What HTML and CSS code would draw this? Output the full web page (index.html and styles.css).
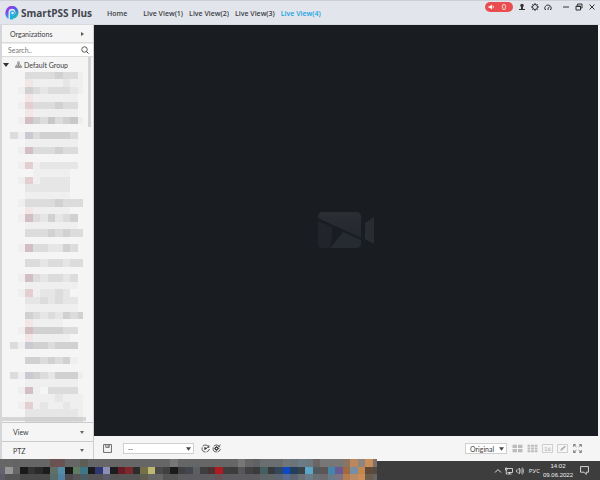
FILE: index.html
```html
<!DOCTYPE html>
<html lang="en">
<head>
  <meta charset="UTF-8">
  <meta name="viewport" content="width=device-width, initial-scale=1.0">
  <title>SmartPSS Plus</title>
  <link rel="stylesheet" href="styles.css">
</head>
<body>
  <header class="header">
    <svg class="logo" viewBox="0 0 28 28">
      <defs>
        <linearGradient id="logoTop" x1="0" y1="0" x2="1" y2="1">
          <stop offset="0" stop-color="#a03be8"/>
          <stop offset="0.45" stop-color="#5a4fe6"/>
          <stop offset="1" stop-color="#18cfae"/>
        </linearGradient>
        <linearGradient id="logoStem" x1="0" y1="0" x2="0" y2="1">
          <stop offset="0" stop-color="#7c46e8"/>
          <stop offset="1" stop-color="#1fb5ee"/>
        </linearGradient>
      </defs>
      <path d="M4 12 A10 10 0 1 1 16 22.500" fill="none" stroke="url(#logoTop)" stroke-width="6"/>
      <path d="M1 12 L7 12 L7 26 A14 14 0 0 1 1 12Z" fill="url(#logoStem)"/>
      <path d="M10 27 L10 15 A5 5 0 1 1 16 19 L16 27Z" fill="#19b4e6"/>
      <circle cx="15" cy="14" r="2.500" fill="#e6ebf5"/>
    </svg>
    <h1 class="brand">SmartPSS Plus</h1>
    <nav class="tabs">
      <a class="tab home" href="#">Home</a>
      <a class="tab" href="#">Live View(1)</a>
      <a class="tab" href="#">Live View(2)</a>
      <a class="tab" href="#">Live View(3)</a>
      <a class="tab active" href="#">Live View(4)</a>
    </nav>
    <div class="header-tools">
      <button class="alarm" type="button">
        <svg viewBox="0 0 16 14"><path d="M1 5h3l5-4v12l-5-4H1z" fill="#fff"/><path d="M11 4q3 3 0 6" fill="none" stroke="#fff" stroke-width="2"/></svg>
        <span>0</span>
      </button>
      <button class="tool" type="button" aria-label="User">
        <svg viewBox="0 0 16 16"><circle cx="8" cy="5" r="3.500"/><path d="M6 8h4v4h4v2H2v-2h4z"/></svg>
      </button>
      <button class="tool" type="button" aria-label="Settings">
        <svg viewBox="0 0 16 16"><g fill="none" stroke="#333"><circle cx="8" cy="8" r="5" stroke-width="2"/><path d="M8 0v3M8 13v3M0 8h3M13 8h3M2.500 2.500l2 2M11.500 11.500l2 2M2.500 13.500l2-2M11.500 4.500l2-2" stroke-width="2"/></g></svg>
      </button>
      <button class="tool" type="button" aria-label="Status">
        <svg viewBox="0 0 16 16"><path d="M4 13H2a6.500 6.500 0 1 1 12 0h-2M7 13l4-6M9 13h1" fill="none" stroke="#333" stroke-width="2"/></svg>
      </button>
    </div>
    <div class="window-tools">
      <button class="tool" type="button" aria-label="Minimize">
        <svg viewBox="0 0 16 16"><path d="M2 8h12" stroke="#333" stroke-width="2"/></svg>
      </button>
      <button class="tool" type="button" aria-label="Restore">
        <svg viewBox="0 0 16 16"><path d="M5 5V2h9v8h-3M2 6h9v8H2zM2 7h9" fill="none" stroke="#333" stroke-width="2"/></svg>
      </button>
      <button class="tool" type="button" aria-label="Close">
        <svg viewBox="0 0 16 16"><path d="M3 3l10 10M13 3L3 13" stroke="#333" stroke-width="2"/></svg>
      </button>
    </div>
  </header>

  <div class="content">
    <aside class="sidebar">
      <button class="section-title organizations" type="button">
        <span>Organizations</span>
        <i class="arrow-right"></i>
      </button>
      <div class="search">
        <input type="text" placeholder="Search.." aria-label="Search">
        <svg viewBox="0 0 16 16"><circle cx="7" cy="7" r="5.500" fill="none" stroke="#333" stroke-width="1.600"/><path d="M11 11l4 4" stroke="#333" stroke-width="2"/></svg>
      </div>
      <div class="tree">
        <div class="tree-root">
          <i class="arrow-down dark"></i>
          <svg viewBox="0 0 16 16"><path d="M6 2h4v4H6zM8 6v3M3 12V9h10v3M8 9v3M1 12h4v3H1zM6 12h4v3H6zM11 12h4v3h-4z" fill="none" stroke="#555" stroke-width="1.200"/></svg>
          <span>Default Group</span>
        </div>
        <svg class="tree-items" id="treeItems" viewBox="0 0 9.730 47" preserveAspectRatio="none"></svg>
        <div class="scroll-y"></div>
        <div class="scroll-x"></div>
      </div>
      <button class="section-title" type="button"><span>View</span><i class="arrow-down"></i></button>
      <button class="section-title last" type="button"><span>PTZ</span><i class="arrow-down"></i></button>
    </aside>

    <main class="live">
      <div class="video">
        <svg class="camera" viewBox="0 0 58 40">
          <defs>
            <linearGradient id="cam" x1="0" y1="0" x2="0" y2="1">
              <stop offset="0" stop-color="#2b2f34"/>
              <stop offset="1" stop-color="#23272e"/>
            </linearGradient>
          </defs>
          <path d="M5 1h34q5 0 5 5v21L1 7q0-6 4-6z" fill="url(#cam)"/>
          <path d="M1 10l14 6v12l-3 9H5q-4 0-4-4z" fill="#21252b"/>
          <path d="M26 21l18 8v4q0 4-5 4H13z" fill="#262a31"/>
          <path d="M48 12l9-6v27l-9-5z" fill="#292d32"/>
        </svg>
      </div>
      <div class="toolbar">
        <button class="tool save" type="button" aria-label="Save view">
          <svg viewBox="0 0 16 16"><path d="M1 1h14v14H1zM5 1v5h6V1M9 2v3" fill="none" stroke="#555" stroke-width="1.500"/></svg>
        </button>
        <select class="plan" aria-label="View plan"><option>--</option></select>
        <div class="tour">
          <button class="tool" type="button" aria-label="Start tour">
            <svg viewBox="0 0 16 16"><path d="M14 6A6.500 6.500 0 0 0 3 4M2 6v4A6.500 6.500 0 0 0 8 14.500M10 14q4-1 5-5M14 2v4h-4" fill="none" stroke="#444" stroke-width="1.500"/><path d="M6 5l5 3-5 3z"/></svg>
          </button>
          <button class="tool" type="button" aria-label="Tour settings">
            <svg viewBox="0 0 16 16"><path d="M14 6A6.500 6.500 0 0 0 3 4M2 6v4A6.500 6.500 0 0 0 8 14.500M10 14q4-1 5-5M15 1l-4 5" fill="none" stroke="#444" stroke-width="1.500"/><circle cx="8" cy="8" r="2.500" fill="none" stroke="#333" stroke-width="2"/><path d="M4 8h2M10 8h3M8 4v2M8 10v3" stroke="#444" stroke-width="1.500"/></svg>
          </button>
        </div>
        <select class="scale" aria-label="Scale"><option>Original</option></select>
        <div class="layouts">
          <button class="layout" type="button" aria-label="4 windows">
            <svg viewBox="0 0 20 16"><path d="M1 1h8v6H1zM11 1h8v6h-8zM1 9h8v6H1zM11 9h8v6h-8z" fill="#bbb"/></svg>
          </button>
          <button class="layout" type="button" aria-label="9 windows">
            <svg viewBox="0 0 20 16"><path d="M1 1h5v4H1zM7.500 1h5v4h-5zM14 1h5v4h-5zM1 6h5v4H1zM7.500 6h5v4h-5zM14 6h5v4h-5zM1 11h5v4H1zM7.500 11h5v4h-5zM14 11h5v4h-5z" fill="#bbb"/></svg>
          </button>
          <button class="layout boxed" type="button">16</button>
          <button class="layout boxed" type="button" aria-label="Custom layout">
            <svg viewBox="0 0 20 16"><path d="M6 12l1-3 7-6 2 2-7 6z" fill="#aaa"/></svg>
          </button>
          <button class="layout" type="button" aria-label="Full screen">
            <svg viewBox="0 0 20 16"><path d="M3 5V1h4M13 1h4v4M17 11v4h-4M7 15H3v-4M3 1l5 4M17 1l-5 4M17 15l-5-4M3 15l5-4" fill="none" stroke="#666" stroke-width="1.500"/></svg>
          </button>
        </div>
      </div>
    </main>
  </div>

  <footer class="taskbar">
    <svg class="apps" id="taskbarApps" viewBox="0.333 0 50.267 2.800" preserveAspectRatio="none"></svg>
    <div class="tray">
      <svg viewBox="0 0 16 16"><path d="M2 11l6-6 6 6" fill="none" stroke="#eee" stroke-width="1.800"/></svg>
      <svg viewBox="0 0 16 16"><path d="M4 3h11v8H5M9 11v3M6 14h7M1 2h3v4H1zM2.500 6v8h3" fill="none" stroke="#eee" stroke-width="1.600"/></svg>
      <svg viewBox="0 0 16 16"><path d="M1 6h2l4-4v12l-4-4H1zM9 5q2 3 0 6M11 3q4 5 0 10M13 1q5 7 0 14" fill="none" stroke="#ddd" stroke-width="1.400"/></svg>
      <span class="lang">РУС</span>
      <div class="clock"><span>14:02</span><span>09.06.2022</span></div>
      <svg class="notify" viewBox="0 0 16 16"><path d="M1 1h14v10h-4v4l-4-4H1z" fill="none" stroke="#eee" stroke-width="1.500"/></svg>
    </div>
  </footer>

  <script src="script.js"></script>
</body>
</html>
```

FILE: styles.css
```css
* {
  box-sizing: border-box;
}

body {
  display: flex;
  flex-direction: column;
  height: 100vh;
  margin: 0;
  overflow: hidden;
  font-family: Lato, sans-serif;
  font-size: 7px;
  color: #3c3c3c;
  background-color: #f5f5f6;
}

button,
input,
select {
  margin: 0;
  padding: 0;
  border: none;
  background: none;
  font: inherit;
  color: inherit;
}

svg {
  display: block;
  flex: none;
}

/* header */
.header {
  display: flex;
  align-items: center;
  flex: none;
  height: 25px;
  padding: 1px 4px 0 5px;
  border-top: 1px solid #cdd0d7;
  border-bottom: 1px solid #d6d8dd;
  background-color: #e2e5eb;
}

.logo {
  width: 14px;
  height: 14px;
}

.brand {
  width: 86px;
  margin: 0 0 0 2px;
  font-family: "Open Sans", sans-serif;
  font-size: 10px;
  font-weight: bold;
  white-space: nowrap;
  color: #41454f;
}

.tabs {
  display: flex;
  gap: 6px;
  font-family: "Open Sans", sans-serif;
  font-weight: 600;
  white-space: nowrap;
}

.tab {
  color: #3c3f45;
  text-decoration: none;
}

.home {
  margin-right: 10px;
}

.active {
  color: #16a4e0;
}

.header-tools,
.window-tools {
  display: flex;
  align-items: center;
  align-self: flex-start;
  gap: 5px;
  height: 10px;
}

.header-tools {
  margin-left: auto;
}

.window-tools {
  margin-left: 10px;
}

.tool svg {
  width: 8px;
  height: 8px;
  fill: #333;
}

.alarm {
  display: flex;
  align-items: center;
  justify-content: space-between;
  width: 28px;
  height: 10px;
  padding: 0 7px 0 3px;
  border-radius: 5px;
  background-color: #ea4d50;
  color: #fff;
}

.alarm svg {
  width: 7px;
  height: 6px;
}

/* sidebar */
.content {
  display: flex;
  flex: 1;
  min-height: 0;
}

.sidebar {
  display: flex;
  flex-direction: column;
  flex: none;
  width: 94px;
  border-left: 2px solid #d5d6da;
  border-right: 1px solid #cfcfd1;
}

.section-title {
  display: flex;
  align-items: center;
  justify-content: space-between;
  flex: none;
  height: 19px;
  padding: 0 9px 0 11px;
  border-top: 1px solid #cacacc;
}

.last {
  height: 20px;
  padding-bottom: 2px;
}

.organizations {
  height: 18px;
  padding-left: 8px;
  border-top: none;
  border-bottom: 1px solid #dcdcdc;
}

.arrow-right {
  border: 2px solid transparent;
  border-left: 3px solid #555;
  border-right: none;
}

.arrow-down {
  border: 2px solid transparent;
  border-top: 3px solid #666;
  border-bottom: none;
}

.search {
  display: flex;
  align-items: center;
  flex: none;
  height: 14px;
  padding: 0 4px 0 6px;
  border-top: 1px solid #ececec;
  border-bottom: 1px solid #dcdcdc;
  background-color: #fff;
}

.search input {
  flex: 1;
  min-width: 0;
  outline: none;
}

.search input::placeholder {
  color: #777;
}

.search svg {
  width: 8px;
  height: 8px;
}

.tree {
  position: relative;
  flex: 1;
  min-height: 0;
  overflow: hidden;
}

.tree-root {
  display: flex;
  align-items: center;
  gap: 2px;
  height: 15px;
  padding-left: 1px;
  white-space: nowrap;
}

.tree-root svg {
  width: 7px;
  height: 7px;
  margin-left: 4px;
}

.dark {
  border-width: 3px;
  border-top: 4px solid #333;
  border-bottom: none;
}

.tree-items {
  width: 73px;
  height: 352px;
  margin-left: 8px;
}

.scroll-y {
  position: absolute;
  top: 0;
  right: 2px;
  width: 3px;
  height: 70px;
  background-color: #d5d5d6;
}

.scroll-x {
  position: absolute;
  left: 0;
  right: 7px;
  bottom: 1px;
  height: 4px;
  background-color: #cececf;
  opacity: 0.8;
}

/* live view */
.live {
  display: flex;
  flex-direction: column;
  flex: 1;
  min-width: 0;
}

.video {
  display: flex;
  align-items: center;
  justify-content: center;
  flex: 1;
  margin-right: 2px;
  background-color: #191d21;
}

.camera {
  width: 58px;
  height: 40px;
}

.toolbar {
  display: flex;
  align-items: center;
  flex: none;
  height: 25px;
  padding: 0 17px 0 9px;
}

.toolbar .tool svg {
  width: 9px;
  height: 9px;
}

.plan,
.scale {
  height: 11px;
  padding: 0 4px;
  appearance: none;
  border: 1px solid #cfcfcf;
  background: #fff url("data:image/svg+xml,%3Csvg xmlns='http://www.w3.org/2000/svg' viewBox='0 0 6 4'%3E%3Cpath d='M0 0h6L3 4z' fill='%23444'/%3E%3C/svg%3E") no-repeat right 2px center / 5px 4px;
}

.plan {
  width: 71px;
  margin-left: 11px;
}

.scale {
  width: 42px;
  margin-left: auto;
}

.tour {
  display: flex;
  gap: 2px;
  margin-left: 7px;
}

.layouts {
  display: flex;
  gap: 4px;
  margin-left: 5px;
}

.layout {
  display: flex;
  align-items: center;
  justify-content: center;
  width: 11px;
  height: 9px;
  color: #aaa;
  font-size: 6px;
}

.layout svg {
  width: 11px;
  height: 9px;
}

.boxed {
  border: 1px solid #d0d0d0;
}

/* taskbar */
.taskbar {
  display: flex;
  align-items: flex-end;
  justify-content: space-between;
  flex: none;
  height: 19px;
  background-color: #3d3d3d;
}

.apps {
  position: relative;
  width: 377px;
  height: 21px;
}

.tray {
  display: flex;
  align-items: center;
  gap: 3px;
  height: 19px;
  padding-right: 11px;
  font-family: "Open Sans", sans-serif;
  font-size: 6px;
  color: #eee;
}

.tray svg {
  width: 8px;
  height: 8px;
}

.lang {
  margin-left: 2px;
}

.clock {
  display: flex;
  flex-direction: column;
  align-items: center;
  font-family: "Liberation Sans", sans-serif;
  line-height: 9px;
}

.tray .notify {
  width: 9px;
  height: 9px;
  margin-left: 4px;
}
```

FILE: script.js
```js
// masked device names, one character per cell
const colors = {
  a: '#efeff0',
  b: '#e6e6e7',
  c: '#dcdcdd',
  d: '#d1d1d2',
  e: '#c8c8ca',
  p: '#f3e6e6',
  q: '#e3cfd1',
  r: '#d3bec3',
  s: '#c9cbd0'
};

const treeRows = [
  '..ccccdcca',
  '..paaaabaa',
  '.adcbcccba',
  '..paaaaaa.',
  '.aqcccdcc.',
  '..paaaaaa.',
  '.ardcecdea',
  '..........',
  'cascddddc.',
  '..aaaaaaa.',
  '.arcccdcc.',
  '..........',
  '.aqabbbbb.',
  '...aaaaa..',
  '.aqabbbb..',
  '..bbbbbb..',
  '..aaaaaa..',
  '.accccdccc',
  '..paaaaa..',
  '.arcbdbcd.',
  '..aaaaaaa.',
  '..cccdcdcc',
  '..........',
  '.arccbbdc.',
  '..........',
  '..ccbccbcc',
  '..........',
  '.arcbccbc.',
  '..aaaaaaa.',
  '.aqabbcb..',
  '..bbcbcbb.',
  '..aaaaaaa.',
  '..dcbcbdcd',
  '..paaaa...',
  '.arddddcc.',
  '..paaaaa..',
  'casddcddd.',
  '..........',
  '..ddcdcda.',
  '..........',
  'casdcbddda',
  '..aaaaaaa.',
  '.ara.cccc.',
  '..aaaabaaa',
  '.aqabaabaa',
  '..bbbbbbba',
  '..cccccccc'
];

const appsTop = '666 666 626566 666 666 666 666 6a5352 6a5352 666 666 5d5d55 666 666 666 666 666 666 666 666 666 666 666 77777a 666 666 666 666 666 666 666 666 777 666 5f6264 6b6e70 6b6e70 6b6e70 737678 6b7478 6b7c86 6b7880 6b6663 777 777 777 8a7464 bd875b 8c8580 c98d59 7c7068 777'.split(' ');
const appsMiddle = '63636f 979797 666 1a1a1a 343434 2a2a2a 1c1c1c 5f7066 538ba9 1a1a1a 607c63 3f7686 1b1b1b 2f3772 8b90b4 1d1d1d 681c25 7a2a2c 2c2c2c 757048 bdb873 4a4a46 404040 1b1b1b 404044 43454f 5c5f62 3e3e3e 4a3232 b01b22 3e3e3e 3c3c3c 54565c 414141 3a3a3a 455e62 363a3c 32465c 0e48c4 223f60 3b4245 5aa5c8 505a5e 5b5555 4485ac 6a5a94 a06a3e 7590a4 c4884f 5f4a3a 514a46'.split(' ');
const appsBottom = '5c5c68 555 555 4a4a4a 4a4a4a 4a4a4a 4a4a4a 566d6c 5280a0 4c4c50 555 4b5c62 555 555 5a5a68 555 555 555 555 5f5d50 666 666 555 555 5c5c60 5c5c60 5c5c60 5c5c60 5c5c60 665358 5c5c60 5c5c60 5c5c60 5c5c60 5c5c60 5c6468 5f6468 5b6470 5a6b90 5b6470 6b7074 6a7c88 6b7074 6b6b70 667c88 7c7484 b47d50 ba8a62 cc8e58 6b5c50 666'.split(' ');

function addCell(svg, x, y, color) {
  const rect = document.createElementNS('http://www.w3.org/2000/svg', 'rect');
  rect.setAttribute('x', x);
  rect.setAttribute('y', y);
  rect.setAttribute('width', 1);
  rect.setAttribute('height', 1);
  rect.setAttribute('fill', color);
  rect.setAttribute('shape-rendering', 'crispEdges');
  svg.appendChild(rect);
}

const tree = document.getElementById('treeItems');
treeRows.forEach((row, y) => {
  [...row].forEach((cell, x) => {
    if (colors[cell]) {
      addCell(tree, x, y, colors[cell]);
    }
  });
});

const apps = document.getElementById('taskbarApps');
[appsTop, appsMiddle, appsBottom].forEach((row, y) => {
  row.forEach((color, x) => addCell(apps, x, y, '#' + color));
});
```
